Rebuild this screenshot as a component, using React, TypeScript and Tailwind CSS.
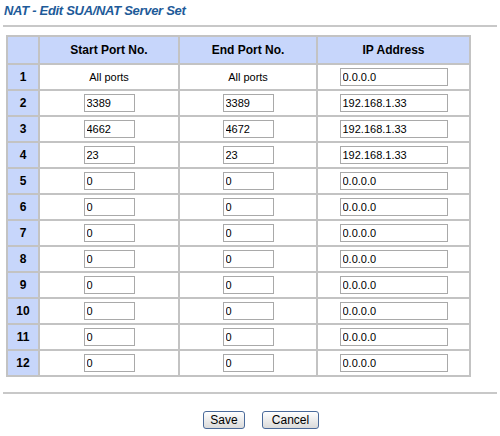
import React from 'react';

type Row = { start: string; end: string; ip: string; fixed?: boolean };

const rows: Row[] = [
  { start: 'All ports', end: 'All ports', ip: '0.0.0.0', fixed: true },
  { start: '3389', end: '3389', ip: '192.168.1.33' },
  { start: '4662', end: '4672', ip: '192.168.1.33' },
  { start: '23', end: '23', ip: '192.168.1.33' },
  ...Array.from({ length: 8 }, () => ({ start: '0', end: '0', ip: '0.0.0.0' })),
];

function Field({ value, wide }: { value: string; wide?: boolean }) {
  return (
    <input
      type="text"
      defaultValue={value}
      className={
        (wide ? 'w-[108px]' : 'w-[51px]') +
        ' h-[18px] border border-[#a9a9a9] bg-white px-[2px] text-[11px] text-black outline-none'
      }
    />
  );
}

export default function App() {
  return (
    <div className="w-[500px] h-[436px] bg-white text-black font-['Liberation_Sans',Arial,sans-serif]">
      {/* Title */}
      <div className="pt-[3px] pl-[4px] h-[18px] text-[13px] leading-[16px] font-bold italic tracking-[-0.3px] text-[#1e5b99]">
        NAT - Edit SUA/NAT Server Set
      </div>
      <div className="mt-[7px] ml-[3px] w-[494px] h-[2px] bg-[#c8c8c8]" />

      {/* Server table */}
      <div className="mt-[8px] ml-[6px] w-[465px] bg-[#c3c3c3] p-[2px] grid grid-cols-[30px_138px_136px_151px] gap-[2px]">
        <div className="h-[26px] bg-[#c7d6fb]" />
        <div className="h-[26px] bg-[#c7d6fb] flex items-center justify-center text-[12px] font-bold">Start Port No.</div>
        <div className="h-[26px] bg-[#c7d6fb] flex items-center justify-center text-[12px] font-bold">End Port No.</div>
        <div className="h-[26px] bg-[#c7d6fb] flex items-center justify-center text-[12px] font-bold">IP Address</div>

        {rows.map((r, i) => (
          <React.Fragment key={i}>
            <div className="h-[24px] bg-[#c7d6fb] flex items-center justify-center text-[12px] font-bold">{i + 1}</div>
            <div className="h-[24px] bg-white flex items-center justify-center text-[11px]">
              {r.fixed ? r.start : <Field value={r.start} />}
            </div>
            <div className="h-[24px] bg-white flex items-center justify-center text-[11px]">
              {r.fixed ? r.end : <Field value={r.end} />}
            </div>
            <div className="h-[24px] bg-white flex items-center justify-center">
              <Field value={r.ip} wide />
            </div>
          </React.Fragment>
        ))}
      </div>

      <div className="mt-[15px] ml-[3px] w-[494px] h-[2px] bg-[#c8c8c8]" />

      {/* Buttons */}
      <div className="mt-[17px] ml-[203px] flex gap-[17px]">
        <button className="w-[42px] h-[18px] rounded-[3px] border border-[#4a6a9a] bg-linear-to-b from-white to-[#dadada] text-[12px] leading-[16px] text-black">
          Save
        </button>
        <button className="w-[57px] h-[18px] rounded-[3px] border border-[#4a6a9a] bg-linear-to-b from-white to-[#dadada] text-[12px] leading-[16px] text-black">
          Cancel
        </button>
      </div>
    </div>
  );
}
